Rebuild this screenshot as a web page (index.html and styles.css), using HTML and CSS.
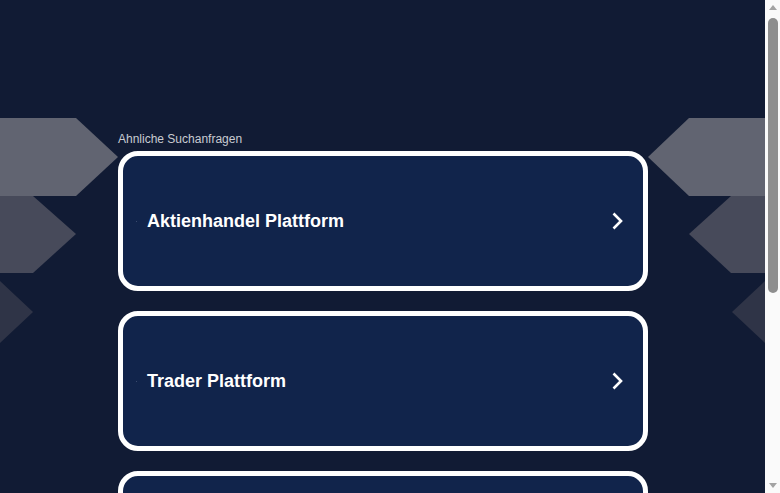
FILE: index.html
```html
<!DOCTYPE html>
<html>
<head>
    <title>Ahnliche Suchanfragen</title>
    <link rel="stylesheet" href="styles.css">
</head>
<body>
    <div class="viewport">
        <div class="page">
            <div class="stage">
                <div class="deco">
                    <svg width="118" height="225" viewBox="0 118 118 225">
                        <polygon points="0,118 76,118 118,157 76,196 0,196" fill="#616471"/>
                        <polygon points="0,196 33,196 76,234 33,273 0,273" fill="#474a5a"/>
                        <polygon points="0,281 33,312 0,343" fill="#2f3447"/>
                    </svg>
                </div>
                <main class="results">
                    <div class="results-label">Ahnliche Suchanfragen</div>
                    <a class="result-card" href="#">
                        <span class="result-dot"></span>
                        <span class="result-text">Aktienhandel Plattform</span>
                        <svg class="chevron" width="12" height="20" viewBox="0 0 12 20">
                            <path d="M2.5 2.5 L10 10 L2.5 17.5" fill="none" stroke="#fff" stroke-width="2.6"/>
                        </svg>
                    </a>
                    <a class="result-card" href="#">
                        <span class="result-dot"></span>
                        <span class="result-text">Trader Plattform</span>
                        <svg class="chevron" width="12" height="20" viewBox="0 0 12 20">
                            <path d="M2.5 2.5 L10 10 L2.5 17.5" fill="none" stroke="#fff" stroke-width="2.6"/>
                        </svg>
                    </a>
                    <a class="result-card" href="#"></a>
                </main>
                <div class="deco">
                    <svg width="117" height="225" viewBox="648 118 117 225">
                        <polygon points="765,118 689,118 648,157 689,196 765,196" fill="#616471"/>
                        <polygon points="765,196 731,196 689,234 731,273 765,273" fill="#474a5a"/>
                        <polygon points="765,281 732,312 765,343" fill="#2f3447"/>
                    </svg>
                </div>
            </div>
        </div>
    </div>
    <div class="scrollbar">
        <div class="scroll-btn"><span class="arrow-up"></span></div>
        <div class="scroll-track"><div class="scroll-thumb"></div></div>
        <div class="scroll-btn"><span class="arrow-down"></span></div>
    </div>
</body>
</html>
```

FILE: styles.css
```css
html, body {
    margin: 0;
    height: 100%;
}
body {
    display: flex;
    overflow: hidden;
    background-color: #111b34;
    font-family: "Liberation Sans", Arial, sans-serif;
    color: #fff;
}
.viewport {
    flex: 1;
    height: 100%;
    overflow: hidden;
}
.page {
    padding-top: 118px;
}
.stage {
    display: flex;
    align-items: flex-start;
}
.deco {
    flex: none;
    display: flex;
}
.deco svg {
    display: block;
}
.results {
    flex: none;
    width: 530px;
}
.results-label {
    margin-top: 14px;
    margin-bottom: 5px;
    font-size: 12px;
    line-height: 14px;
    color: #c9cbd1;
}
.result-card {
    display: flex;
    align-items: center;
    box-sizing: border-box;
    height: 140px;
    margin-bottom: 20px;
    padding: 0 20px 0 13px;
    background-color: #11244b;
    border: 5px solid #fff;
    border-radius: 20px;
    color: #fff;
    text-decoration: none;
}
.result-dot {
    width: 1px;
    height: 1px;
    background-color: #3a4a6e;
}
.result-text {
    flex: 1;
    margin-left: 10px;
    font-size: 18px;
    font-weight: bold;
}
.chevron {
    flex: none;
    display: block;
}
.scrollbar {
    flex: none;
    width: 15px;
    height: 100%;
    display: flex;
    flex-direction: column;
    background-color: #fafafa;
}
.scroll-btn {
    height: 15px;
    display: flex;
    align-items: center;
    justify-content: center;
}
.arrow-up {
    width: 0;
    height: 0;
    border-left: 4px solid transparent;
    border-right: 4px solid transparent;
    border-bottom: 5px solid #a3a3a3;
}
.arrow-down {
    width: 0;
    height: 0;
    border-left: 4px solid transparent;
    border-right: 4px solid transparent;
    border-top: 5px solid #a3a3a3;
}
.scroll-track {
    flex: 1;
    padding: 3px 2px 0 3px;
}
.scroll-thumb {
    height: 275px;
    background-color: #8e8e8e;
    border-radius: 5px;
}
```
